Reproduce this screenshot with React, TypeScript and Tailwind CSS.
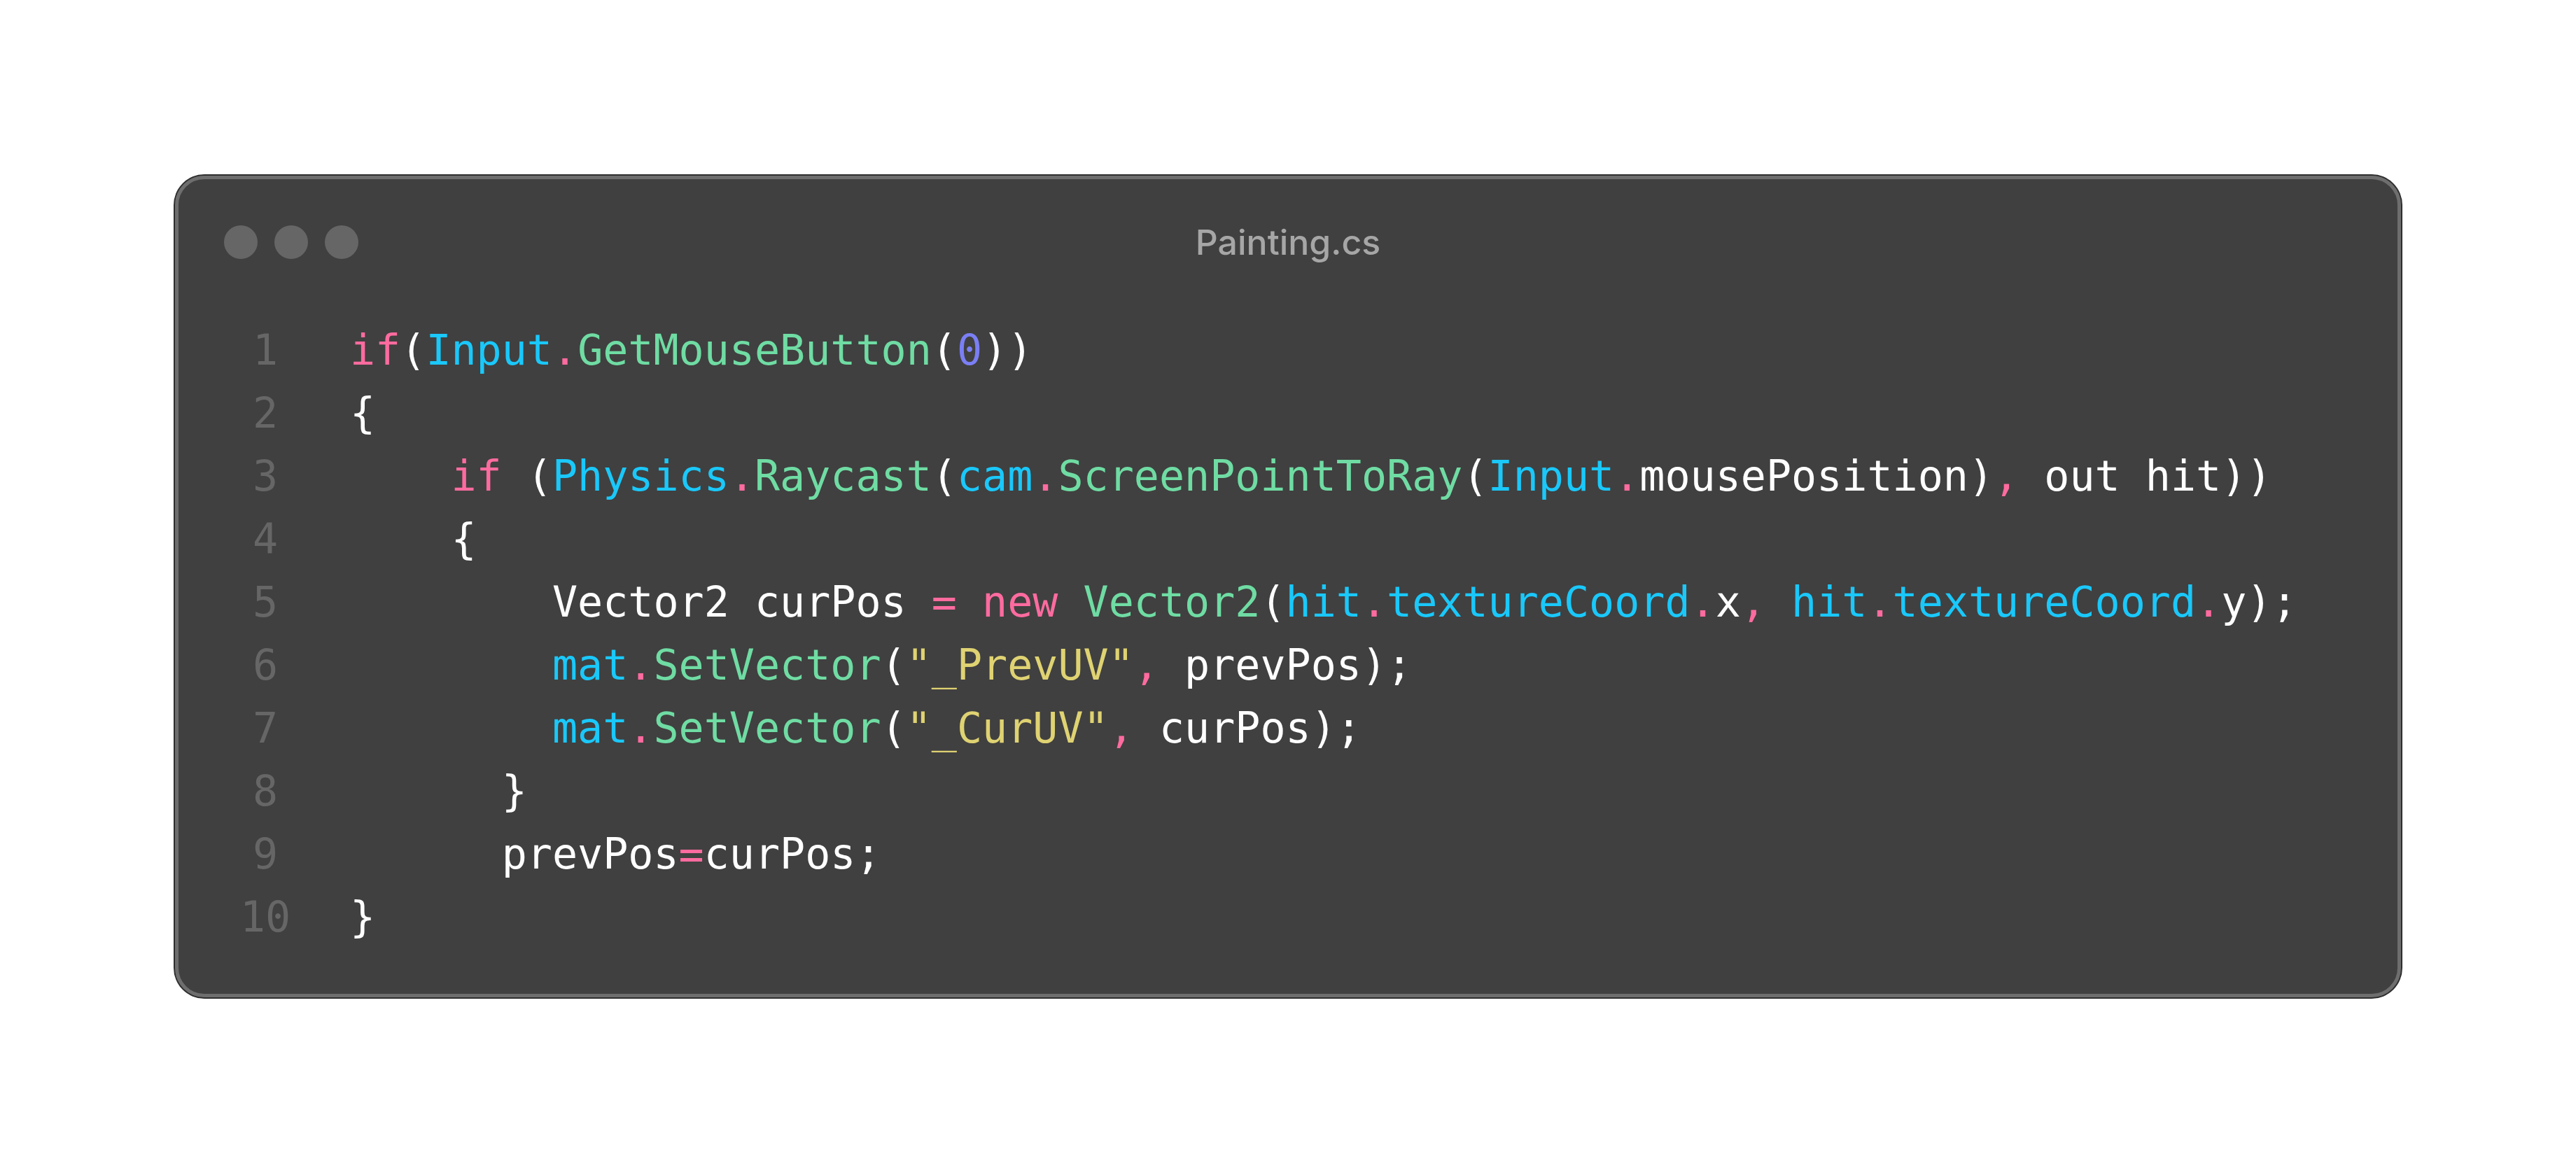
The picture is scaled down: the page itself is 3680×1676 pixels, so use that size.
const C = {
  k: "text-[#ff6b9f]",
  t: "text-[#1ac8fa]",
  f: "text-[#6fdca3]",
  s: "text-[#dfd272]",
  n: "text-[#7b7ff5]",
  w: "text-white",
};

type Tok = [string, keyof typeof C];

const lines: Tok[][] = [
  [["if", "k"], ["(", "w"], ["Input", "t"], [".", "k"], ["GetMouseButton", "f"], ["(", "w"], ["0", "n"], ["))", "w"]],
  [["{", "w"]],
  [["    ", "w"], ["if", "k"], [" (", "w"], ["Physics", "t"], [".", "k"], ["Raycast", "f"], ["(", "w"], ["cam", "t"], [".", "k"], ["ScreenPointToRay", "f"], ["(", "w"], ["Input", "t"], [".", "k"], ["mousePosition)", "w"], [",", "k"], [" out hit))", "w"]],
  [["    {", "w"]],
  [["        Vector2 curPos ", "w"], ["=", "k"], [" ", "w"], ["new", "k"], [" ", "w"], ["Vector2", "f"], ["(", "w"], ["hit", "t"], [".", "k"], ["textureCoord", "t"], [".", "k"], ["x", "w"], [",", "k"], [" ", "w"], ["hit", "t"], [".", "k"], ["textureCoord", "t"], [".", "k"], ["y);", "w"]],
  [["        ", "w"], ["mat", "t"], [".", "k"], ["SetVector", "f"], ["(", "w"], ["\"_PrevUV\"", "s"], [",", "k"], [" prevPos);", "w"]],
  [["        ", "w"], ["mat", "t"], [".", "k"], ["SetVector", "f"], ["(", "w"], ["\"_CurUV\"", "s"], [",", "k"], [" curPos);", "w"]],
  [["      }", "w"]],
  [["      prevPos", "w"], ["=", "k"], ["curPos;", "w"]],
  [["}", "w"]],
];

export default function App() {
  return (
    <div className="flex h-[1676px] w-full items-center justify-center bg-white">
      <div className="flex h-[1174px] w-[3180px] flex-col rounded-[42px] border-[5px] border-[#6e6e6e] bg-[#404040] px-[65px] pt-[65px] shadow-[0_0_0_2px_#2e2e2e]">
        <div className="grid h-[48px] grid-cols-[1fr_auto_1fr] items-center">
          <div className="flex gap-[24px]">
            <span className="h-[48px] w-[48px] rounded-full bg-[#666666]"></span>
            <span className="h-[48px] w-[48px] rounded-full bg-[#666666]"></span>
            <span className="h-[48px] w-[48px] rounded-full bg-[#666666]"></span>
          </div>
          <span className="font-['Inter',sans-serif] text-[50px] font-medium leading-none text-[#a6a6a6]">Painting.cs</span>
          <div></div>
        </div>

        <div className="mt-[86px] flex pl-[18px] font-['DejaVu_Sans_Mono',monospace] text-[60px] leading-[90px]">
          <div className="flex w-[82px] flex-col text-center text-[#666666]">
            {lines.map((_, i) => (
              <span key={i}>{i + 1}</span>
            ))}
          </div>
          <div className="ml-[80px] flex flex-col">
            {lines.map((toks, i) => (
              <div key={i} className="whitespace-pre">
                {toks.map(([txt, c], j) => (
                  <span key={j} className={C[c]}>{txt}</span>
                ))}
              </div>
            ))}
          </div>
        </div>
      </div>
    </div>
  );
}
